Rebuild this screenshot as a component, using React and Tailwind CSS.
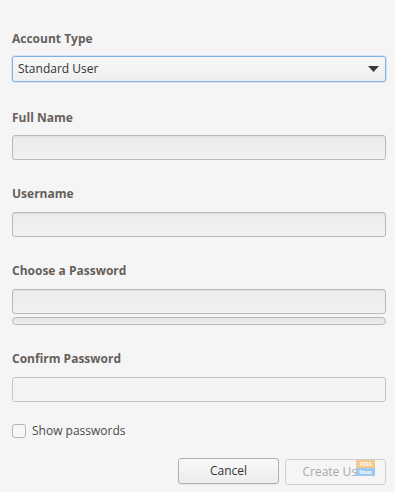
import React, { useState } from "react";

const Label = ({ children, className = "" }) => (
  <div className={"h-[18px] leading-[18px] text-[12px] font-bold text-[#675f5b] " + className}>
    {children}
  </div>
);

const Field = ({ className = "", flat = false }) => (
  <div
    className={
      "h-[25px] rounded-[3px] border " +
      (flat
        ? "border-[#c4c4c4] bg-[#f4f4f4] "
        : "border-[#b8b8b8] bg-gradient-to-b from-[#ebebeb] to-[#f2f2f2] shadow-[inset_0_1px_1px_rgba(0,0,0,0.04)] ") +
      className
    }
  />
);

export default function App() {
  const [show, setShow] = useState(false);

  return (
    <div
      className="w-[395px] h-[492px] bg-[#f5f5f5] pl-3 pr-[9px] pt-[30px] overflow-hidden"
      style={{ fontFamily: '"Open Sans", "Noto Sans", sans-serif' }}
    >
      <Label>Account Type</Label>
      <div className="mt-[8px] h-[26px] rounded-[3px] border border-[#7db3ec] bg-gradient-to-b from-[#f7f7f7] to-[#efefef] shadow-[0_0_0_1px_rgba(125,179,236,0.25)] flex items-center pl-[5px] pr-[6px]">
        <span className="flex-1 text-[12px] text-[#333]">Standard User</span>
        <svg width="11" height="6" viewBox="0 0 11 6">
          <path d="M0 0h11L5.5 6z" fill="#3a3a3a" />
        </svg>
      </div>

      <Label className="mt-[27px]">Full Name</Label>
      <Field className="mt-[8px]" />

      <Label className="mt-[25px]">Username</Label>
      <Field className="mt-[9px]" />

      <Label className="mt-[25px]">Choose a Password</Label>
      <Field className="mt-[9px]" />
      <div className="mt-[3px] h-[8px] rounded-full border border-[#b8b8b8] bg-gradient-to-b from-[#e6e6e6] to-[#efefef]" />

      <Label className="mt-[25px]">Confirm Password</Label>
      <Field className="mt-[9px]" flat />

      <label className="mt-[22px] flex items-center h-[14px] cursor-pointer">
        <input
          type="checkbox"
          checked={show}
          onChange={(e) => setShow(e.target.checked)}
          className="appearance-none w-[14px] h-[14px] rounded-[3px] border border-[#b5b5b5] bg-[#f7f7f7]"
        />
        <span className="ml-[6px] text-[12px] text-[#4a4a4a]">Show passwords</span>
      </label>

      <div className="mt-[20px] flex justify-end gap-[6px]">
        <button className="w-[101px] h-[26px] rounded-[3px] border border-[#b0b0b0] bg-gradient-to-b from-[#f8f8f8] to-[#ececec] text-[12px] text-[#333] shadow-[0_1px_1px_rgba(0,0,0,0.06)]">
          Cancel
        </button>
        <div className="relative">
          <button
            disabled
            className="w-[101px] h-[26px] rounded-[3px] border border-[#cfcfcf] bg-[#f5f5f5] text-[12px] text-[#a9a9a9]"
          >
            Create User
          </button>
          <div className="absolute left-[71px] top-[2px] w-[19px] flex flex-col text-[5px] font-bold leading-[8px] text-white text-center pointer-events-none">
            <span className="bg-[#f5c98a]">FOSS</span>
            <span className="bg-[#9cc8ee]">linux</span>
          </div>
        </div>
      </div>
    </div>
  );
}
